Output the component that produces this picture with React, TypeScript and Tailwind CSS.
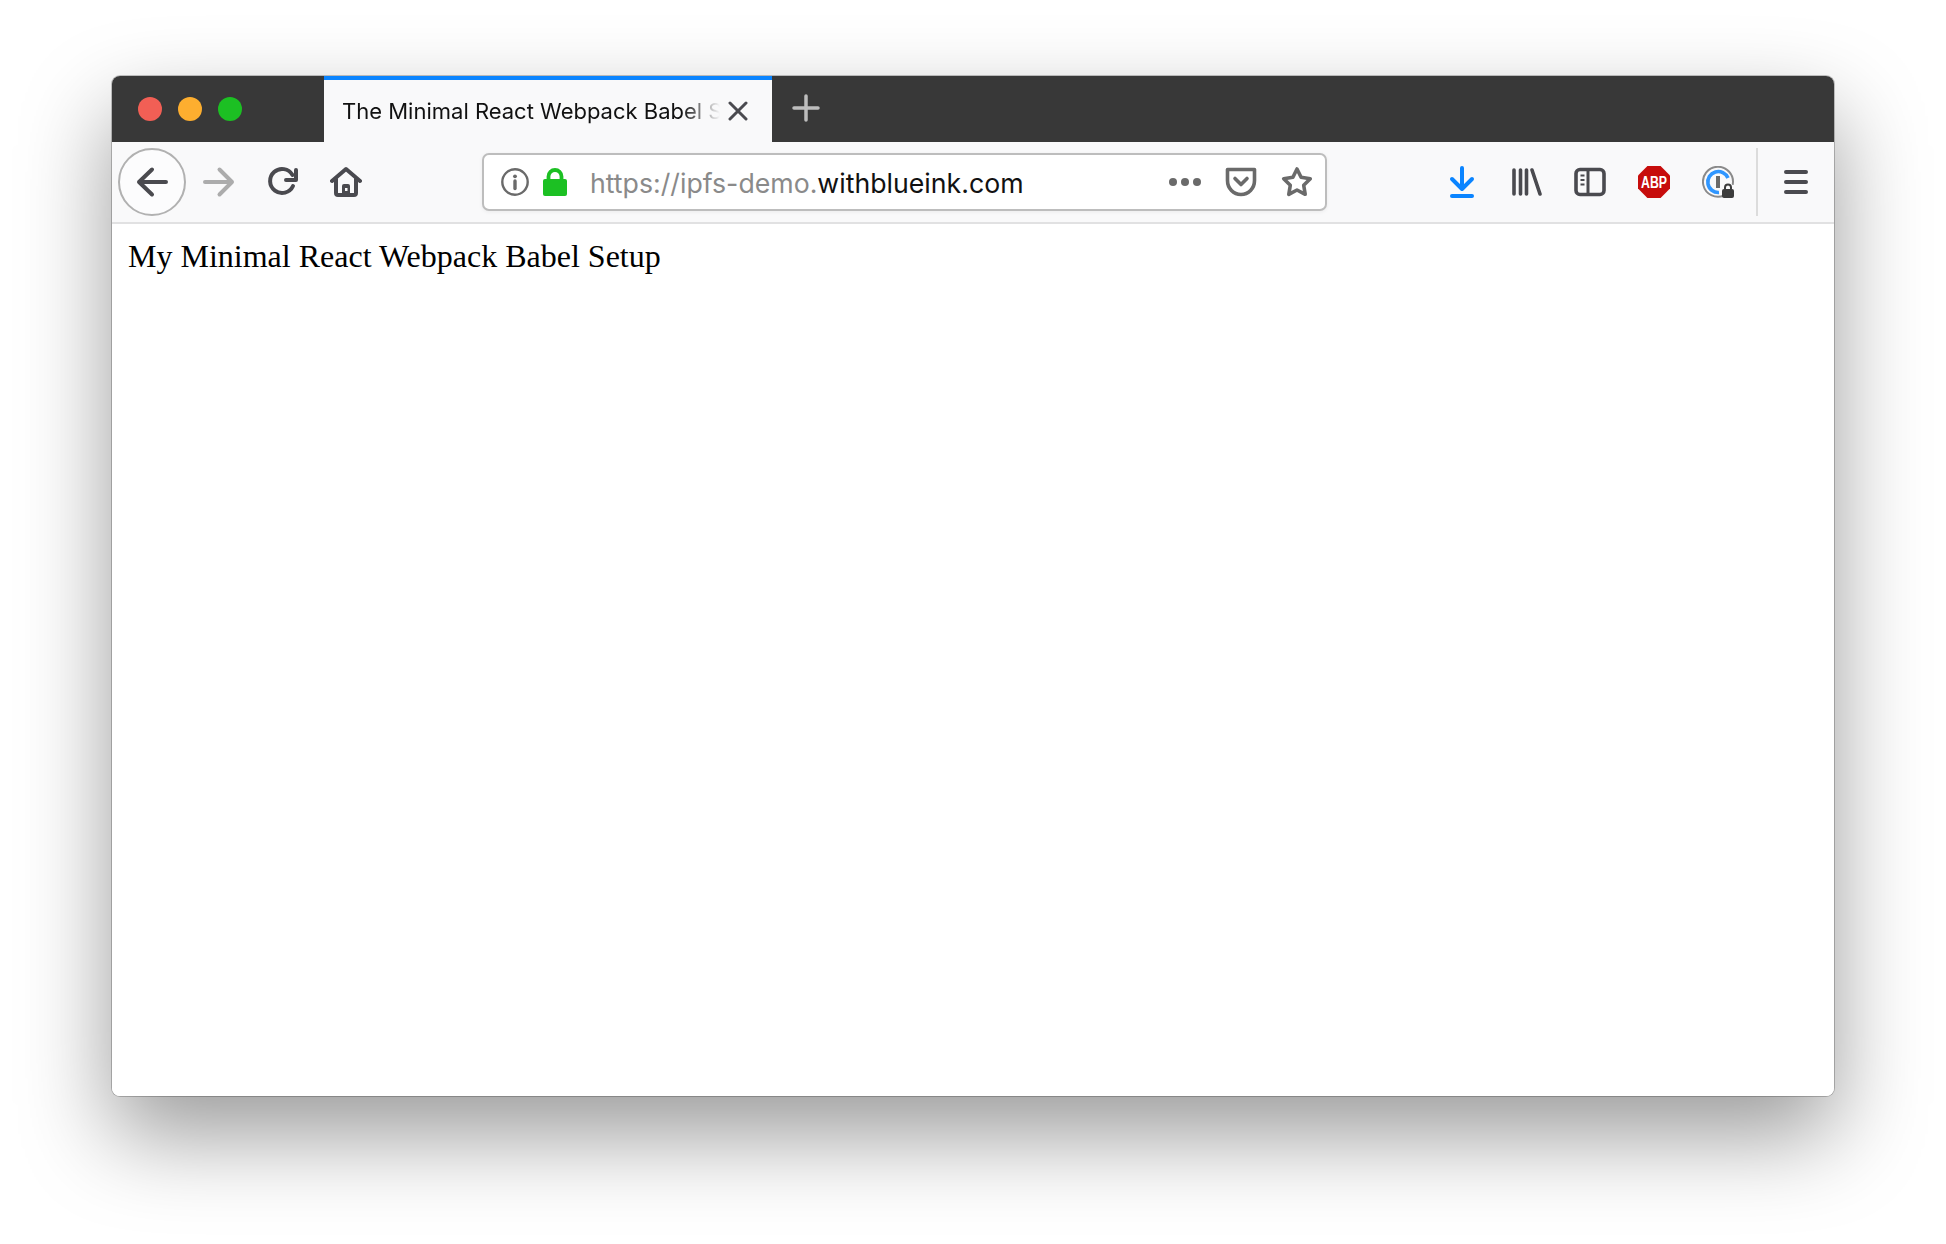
import React from "react";

const dark = "#4a4a4f";
const mid = "#6a6a6a";

function Svg({ size = 32, children, className = "" }: { size?: number; children: React.ReactNode; className?: string }) {
  return (
    <svg width={size} height={size} viewBox={`0 0 ${size} ${size}`} fill="none" strokeLinecap="round" strokeLinejoin="round" className={`shrink-0 ${className}`}>
      {children}
    </svg>
  );
}

export default function App() {
  return (
    <div className="h-[1244px] w-full overflow-hidden bg-white pl-[112px] pt-[76px]">
      <div className="flex h-[1020px] w-[1722px] flex-col overflow-hidden rounded-[8px] bg-white shadow-[0_0_0_1px_rgba(0,0,0,0.22),0_39px_90px_rgba(0,0,0,0.4)]">
        {/* title bar */}
        <div className="flex h-[66px] shrink-0 items-stretch bg-[#383838]">
          <div className="flex w-[212px] items-center gap-[16px] pl-[26px]">
            <span className="h-[24px] w-[24px] rounded-full bg-[#f25f55]" />
            <span className="h-[24px] w-[24px] rounded-full bg-[#fdae2f]" />
            <span className="h-[24px] w-[24px] rounded-full bg-[#1cc023]" />
          </div>
          <div className="flex w-[448px] items-center border-t-[4px] border-[#0a84ff] bg-[#f9f9fa] pl-[18px]">
            <div className="w-[378px] overflow-hidden whitespace-nowrap font-['Inter',sans-serif] text-[22px] text-[#111111] [mask-image:linear-gradient(to_right,black_340px,transparent_378px)]">
              The Minimal React Webpack Babel Setup
            </div>
            <Svg size={20} className="ml-[8px]">
              <path d="M2 2L18 18M18 2L2 18" stroke={dark} strokeWidth="3" />
            </Svg>
          </div>
          <div className="ml-[20px] flex items-center pb-[2px]">
            <Svg size={28}>
              <path d="M14 2V26M2 14H26" stroke="#bdbdbd" strokeWidth="3.5" />
            </Svg>
          </div>
        </div>

        {/* toolbar */}
        <div className="flex h-[82px] shrink-0 items-center border-b-[2px] border-[#e1e1e2] bg-[#f9f9fa]">
          <div className="ml-[6px] flex h-[68px] w-[68px] items-center justify-center rounded-full border-[2px] border-[#b1b1b1] bg-white/50">
            <Svg>
              <path d="M30 16H3M16 3.5L3 16L16 28.5" stroke={dark} strokeWidth="4" />
            </Svg>
          </div>
          <Svg className="ml-[17px]">
            <path d="M2 16H29M16.5 3.5L29 16L16.5 28.5" stroke="#acacac" strokeWidth="4" />
          </Svg>
          <Svg className="ml-[31px]">
            <path d="M27 20A12 12 0 1 1 26.5 9" stroke={dark} strokeWidth="4" />
            <path d="M30 4V14H20" stroke={dark} strokeWidth="4" />
          </Svg>
          <Svg className="ml-[32px]">
            <path d="M2 15L16 3L30 15" stroke={dark} strokeWidth="4" />
            <path d="M6 13V27Q6 29 8 29H24Q26 29 26 27V13" stroke={dark} strokeWidth="4" />
            <path d="M12 29V20Q12 18 14 18H18Q20 18 20 20V29Z" fill={dark} />
            <rect x="15" y="22" width="2.5" height="3" fill="#f9f9fa" />
          </Svg>

          <div className="ml-[120px] flex h-[58px] w-[845px] items-center rounded-[7px] border-[2px] border-[#bdbdbd] bg-white pl-[17px] pr-[12px] shadow-[0_1px_4px_rgba(0,0,0,0.06)]">
            <Svg size={28}>
              <circle cx="14" cy="14" r="12.7" stroke={mid} strokeWidth="2.4" />
              <circle cx="14" cy="8.3" r="1.9" fill={mid} />
              <path d="M14 13V20.5" stroke={mid} strokeWidth="3.4" />
            </Svg>
            <svg width="24" height="28" viewBox="0 0 24 28" fill="none" className="ml-[14px] shrink-0">
              <path d="M5.5 13V8.5a6.5 6.5 0 0 1 13 0V13" stroke="#1cc023" strokeWidth="3.8" />
              <rect x="0" y="11" width="24" height="17" rx="2" fill="#1cc023" />
            </svg>
            <div className="ml-[23px] flex-1 whitespace-nowrap pt-[3px] font-['Inter',sans-serif] text-[26.7px] leading-none text-[#111111]">
              <span className="text-[#8a8a8a]">https://ipfs-demo.</span>withblueink.com
            </div>
            <Svg>
              <circle cx="4" cy="16" r="4" fill={mid} />
              <circle cx="16" cy="16" r="4" fill={mid} />
              <circle cx="28" cy="16" r="4" fill={mid} />
            </Svg>
            <Svg className="ml-[24px]">
              <path d="M2.5 3.5H29.5V14.5C29.5 22.5 23.5 28.5 16 28.5C8.5 28.5 2.5 22.5 2.5 14.5Z" stroke={mid} strokeWidth="3.6" />
              <path d="M10 12.5L16 18.5L22 12.5" stroke={mid} strokeWidth="3.6" />
            </Svg>
            <Svg className="ml-[24px]">
              <path d="M16 3L20.1 11.3L29.3 12.7L22.7 19.2L24.2 28.3L16 24L7.8 28.3L9.3 19.2L2.7 12.7L11.9 11.3Z" stroke={mid} strokeWidth="3.6" />
            </Svg>
          </div>

          <Svg className="ml-[119px]">
            <path d="M16 2V22M6 13L16 23L26 13" stroke="#0a84ff" strokeWidth="4" />
            <path d="M6 30H26" stroke="#0a84ff" strokeWidth="4" />
          </Svg>
          <Svg className="ml-[33px]">
            <path d="M3 4V28M9.5 4V28M15.5 4V28M21 4L29 28" stroke={dark} strokeWidth="3.6" />
          </Svg>
          <Svg className="ml-[31px]">
            <rect x="2" y="3.5" width="28" height="25" rx="4" stroke={dark} strokeWidth="3.6" />
            <path d="M14 4V28" stroke={dark} strokeWidth="3" />
            <path d="M6.5 9.5H10.5M6.5 14H10.5M6.5 18.5H10.5" stroke={dark} strokeWidth="2" strokeLinecap="butt" />
          </Svg>
          <Svg className="ml-[32px]">
            <path d="M9.4 0H22.6L32 9.4V22.6L22.6 32H9.4L0 22.6V9.4Z" fill="#c70d0c" />
            <text x="16" y="21.5" textAnchor="middle" textLength="26" lengthAdjust="spacingAndGlyphs" fontFamily="'Liberation Sans',sans-serif" fontWeight="700" fontSize="16" fill="#ffffff">ABP</text>
          </Svg>
          <Svg className="ml-[32px]">
            <path d="M22 29.5A15 15 0 1 1 30.8 18" stroke="#8a8a8a" strokeWidth="2" />
            <path d="M17 26.5A10.5 10.5 0 1 1 26 12" stroke="#2f96ff" strokeWidth="3.6" strokeLinecap="butt" />
            <rect x="14" y="10" width="4" height="12" fill={mid} />
            <path d="M23 24V21.5a3 3 0 0 1 6 0V24" stroke="#3c3c3c" strokeWidth="2" />
            <rect x="20" y="23" width="12" height="9" rx="2" fill="#3c3c3c" />
          </Svg>
          <div className="ml-[22px] h-[68px] w-[2px] bg-[#dcdcdc]" />
          <Svg className="ml-[22px]">
            <path d="M6 6H26M6 16H26M6 26H26" stroke={dark} strokeWidth="4" />
          </Svg>
        </div>

        {/* page */}
        <div className="flex-1 bg-white pl-[16px] pt-[7px] font-['Liberation_Serif',serif] text-[32px] leading-[50px] text-black">
          My Minimal React Webpack Babel Setup
        </div>
      </div>
    </div>
  );
}
